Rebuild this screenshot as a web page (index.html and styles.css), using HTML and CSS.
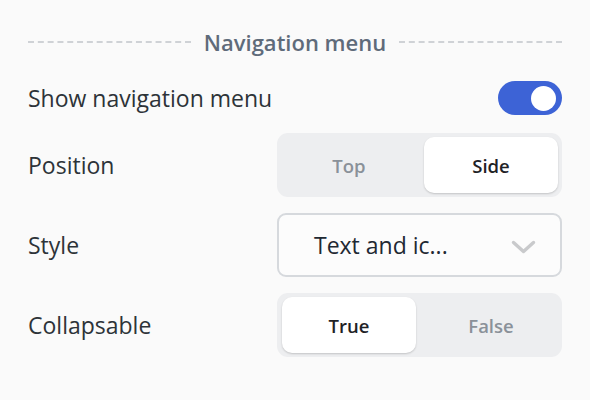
FILE: index.html
```html
<!DOCTYPE html>
<html>
<head>
<meta charset="utf-8">
<link rel="stylesheet" href="styles.css">
</head>
<body>
<div class="panel">
  <div class="section-title">
    <span class="dash"></span>
    <span class="title-text">Navigation menu</span>
    <span class="dash"></span>
  </div>
  <div class="row row-toggle">
    <span class="label">Show navigation menu</span>
    <span class="toggle"><span class="knob"></span></span>
  </div>
  <div class="row">
    <span class="label">Position</span>
    <div class="segmented">
      <span class="seg">Top</span>
      <span class="seg active">Side</span>
    </div>
  </div>
  <div class="row">
    <span class="label">Style</span>
    <div class="select">
      <span class="select-text">Text and ic...</span>
      <svg class="chevron" width="25" height="15" viewBox="0 0 25 15"><path d="M2.5 2.5 L12.5 11.5 L22.5 2.5" fill="none" stroke="#c9cacc" stroke-width="3.4" stroke-linecap="round" stroke-linejoin="round"/></svg>
    </div>
  </div>
  <div class="row">
    <span class="label">Collapsable</span>
    <div class="segmented">
      <span class="seg active">True</span>
      <span class="seg">False</span>
    </div>
  </div>
</div>
</body>
</html>
```

FILE: styles.css
```css
html, body {
  margin: 0;
  padding: 0;
  background: #fafafa;
}
body {
  font-family: "Open Sans", "Liberation Sans", sans-serif;
  width: 590px;
  height: 400px;
  overflow: hidden;
}
.panel {
  padding: 26px 28px 0 28px;
  display: flex;
  flex-direction: column;
}
.section-title {
  display: flex;
  align-items: center;
  gap: 13px;
  height: 32px;
}
.dash {
  flex: 1;
  height: 0;
  border-top: 2px dashed #cfd2d6;
}
.title-text {
  font-size: 22px;
  font-weight: 600;
  color: #5f6b7a;
}
.row {
  display: flex;
  align-items: center;
  justify-content: space-between;
  margin-top: 16px;
}
.row-toggle {
  margin-top: 23px;
  margin-bottom: 2px;
  height: 34px;
}
.label {
  font-size: 23px;
  color: #2d3338;
}
.toggle {
  width: 64px;
  height: 34px;
  border-radius: 17px;
  background: #3d63d6;
  display: flex;
  align-items: center;
  justify-content: flex-end;
  padding-right: 6px;
  box-sizing: border-box;
}
.knob {
  width: 25px;
  height: 25px;
  border-radius: 50%;
  background: #fff;
}
.segmented {
  width: 285px;
  height: 64px;
  box-sizing: border-box;
  background: #edeef0;
  border-radius: 11px;
  padding: 4px 4px 4px 5px;
  display: grid;
  grid-template-columns: 1fr 1fr;
  gap: 8px;
}
.seg {
  display: flex;
  align-items: center;
  justify-content: center;
  font-size: 18.5px;
  font-weight: 600;
  color: #8a9199;
  border-radius: 10px;
}
.seg.active {
  background: #fff;
  color: #1f2226;
  box-shadow: 0 1px 2px rgba(0,0,0,0.18);
}
.select {
  width: 285px;
  height: 64px;
  box-sizing: border-box;
  border: 2px solid #d6d9dd;
  border-radius: 9px;
  background: #fcfcfc;
  display: flex;
  align-items: center;
  justify-content: space-between;
  padding: 0 24px 0 35px;
}
.select-text {
  font-size: 23px;
  color: #1f2933;
}
.chevron {
  display: block;
  margin-top: 4px;
}
```
